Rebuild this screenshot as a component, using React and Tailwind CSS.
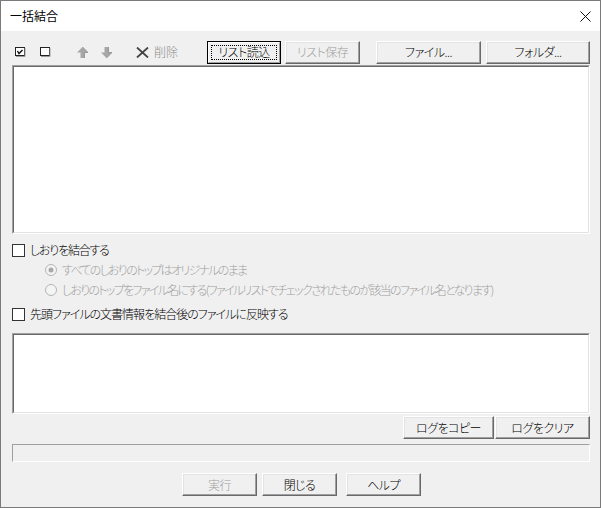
import React from "react";

const FONT = { fontFamily: '"Noto Sans CJK JP", "Noto Sans", sans-serif' };

const Btn = ({ label, className = "", disabled, focused }) => {
  if (focused) {
    return (
      <div className={`h-[23px] border border-black ${className}`}>
        <div className="h-full w-full border-t border-l border-t-white border-l-white border-r border-b border-r-[#a0a0a0] border-b-[#a0a0a0] bg-[#f0f0f0] p-[2px]">
          <div className="flex h-full w-full items-center justify-center border border-dotted border-black text-[12px] leading-none tracking-[-0.5px] text-black">
            {label}
          </div>
        </div>
      </div>
    );
  }
  return (
    <div
      className={`flex h-[23px] items-center justify-center border-t border-l border-t-white border-l-white border-r border-b border-r-[#696969] border-b-[#696969] bg-[#f0f0f0] text-[12px] leading-none tracking-[-0.5px] shadow-[inset_-1px_-1px_0_#a0a0a0,inset_1px_1px_0_#e3e3e3] ${
        disabled ? "text-[#a0a0a0]" : "text-black"
      } ${className}`}
    >
      {label}
    </div>
  );
};

const Checkbox = () => (
  <div className="h-[13px] w-[13px] border border-[#333333] bg-white" />
);

const Radio = ({ checked }) => (
  <svg width="12" height="12" viewBox="0 0 12 12">
    <circle cx="6" cy="6" r="5.5" fill="#f4f4f4" stroke="#b4b4b4" />
    {checked && <circle cx="6" cy="6" r="2.5" fill="#a8a8a8" />}
  </svg>
);

const Sunken = ({ className = "" }) => (
  <div
    className={`border-t border-l border-t-[#a0a0a0] border-l-[#a0a0a0] border-r border-b border-r-white border-b-white ${className}`}
  >
    <div className="h-full w-full border-t border-l border-t-[#696969] border-l-[#696969] border-r border-b border-r-[#e3e3e3] border-b-[#e3e3e3] bg-white" />
  </div>
);

export default function App() {
  return (
    <div
      style={FONT}
      className="flex h-[508px] w-[601px] flex-col border border-[#7a7a7a] bg-[#f0f0f0] font-light [font-feature-settings:'palt']"
    >
      {/* title bar */}
      <div className="flex h-[30px] items-center justify-between bg-white pl-[9px] pr-[9px]">
        <span className="text-[12px] font-normal text-black">一括結合</span>
        <svg width="11" height="11" viewBox="0 0 11 11">
          <path d="M0.5 0.5 L10.5 10.5 M10.5 0.5 L0.5 10.5" stroke="#111" strokeWidth="1" />
        </svg>
      </div>

      <div className="flex flex-1 flex-col pl-[11px] pr-[10px]">
        {/* toolbar */}
        <div className="mt-[10px] flex h-[22px] items-center">
          <svg className="ml-[3px]" width="11" height="10" viewBox="0 0 11 10">
            <rect x="0.5" y="0.5" width="9" height="8" fill="#fff" stroke="#222" />
            <path d="M10 1 V9.5 H1" stroke="#9a9a9a" fill="none" />
            <path d="M2.5 4 L4 6.5 L7.5 3" stroke="#111" strokeWidth="1.4" fill="none" />
          </svg>
          <svg className="ml-[14px]" width="11" height="10" viewBox="0 0 11 10">
            <rect x="0.5" y="0.5" width="9" height="8" fill="#fff" stroke="#222" />
            <path d="M10 1 V9.5 H1" stroke="#9a9a9a" fill="none" />
          </svg>
          <svg className="ml-[26px]" width="11" height="11" viewBox="0 0 11 11">
            <path d="M5.5 0 L11 5.5 L7.5 5.5 L7.5 11 L3.5 11 L3.5 5.5 L0 5.5 Z" fill="#a6a6a6" />
            <path d="M5.5 0 L11 5.5 L7.5 5.5 L7.5 11" fill="none" stroke="#8a8a8a" strokeWidth="0.8" />
          </svg>
          <svg className="ml-[13px]" width="11" height="11" viewBox="0 0 11 11">
            <path d="M5.5 11 L11 5.5 L7.5 5.5 L7.5 0 L3.5 0 L3.5 5.5 L0 5.5 Z" fill="#a6a6a6" />
            <path d="M5.5 11 L11 5.5 L7.5 5.5 L7.5 0" fill="none" stroke="#8a8a8a" strokeWidth="0.8" />
          </svg>
          <svg className="ml-[24px]" width="13" height="11" viewBox="0 0 13 11">
            <path d="M1 0.5 L12 10.5 M12 0.5 L1 10.5" stroke="#444" strokeWidth="1.8" />
          </svg>
          <span className="ml-[5px] w-[26px] text-[12px] leading-none text-[#8c8c8c]">削除</span>
          <Btn label="リスト読込" focused className="ml-[27px] w-[74px]" />
          <Btn label="リスト保存" disabled className="ml-[4px] w-[75px]" />
          <Btn label="ファイル..." className="ml-[16px] w-[105px]" />
          <Btn label="フォルダ..." className="ml-[5px] w-[104px]" />
        </div>

        {/* file list */}
        <Sunken className="mt-[2px] h-[169px]" />

        {/* options */}
        <div className="mt-[6px] flex h-[20px] items-center">
          <Checkbox />
          <span className="ml-[5px] text-[12px] tracking-[-1.2px] text-black">しおりを結合する</span>
        </div>
        <div className="flex h-[20px] items-center pl-[33px]">
          <Radio checked />
          <span className="ml-[5px] text-[12px] tracking-[-1.7px] text-[#a0a0a0]">すべてのしおりのトップはオリジナルのまま</span>
        </div>
        <div className="flex h-[20px] items-center pl-[33px]">
          <Radio />
          <span className="ml-[5px] text-[12px] tracking-[-1.7px] text-[#a0a0a0]">
            しおりのトップをファイル名にする(ファイルリストでチェックされたものが該当のファイル名となります)
          </span>
        </div>
        <div className="mt-[4px] flex h-[20px] items-center">
          <Checkbox />
          <span className="ml-[5px] text-[12px] tracking-[-1px] text-black">先頭ファイルの文書情報を結合後のファイルに反映する</span>
        </div>

        {/* log */}
        <Sunken className="mt-[9px] h-[81px]" />
        <div className="mt-[2px] flex justify-end gap-[1px]">
          <Btn label="ログをコピー" className="w-[91px]" />
          <Btn label="ログをクリア" className="w-[95px]" />
        </div>

        {/* progress */}
        <div className="mt-[5px] h-[18px] border-t border-l border-t-[#a0a0a0] border-l-[#a0a0a0] border-r border-b border-r-white border-b-white bg-[#f0f0f0]" />

        {/* bottom buttons */}
        <div className="mt-[11px] flex">
          <Btn label="実行" disabled className="ml-[170px] w-[75px]" />
          <Btn label="閉じる" className="ml-[5px] w-[75px]" />
          <Btn label="ヘルプ" className="ml-[9px] w-[75px]" />
        </div>
      </div>
    </div>
  );
}
